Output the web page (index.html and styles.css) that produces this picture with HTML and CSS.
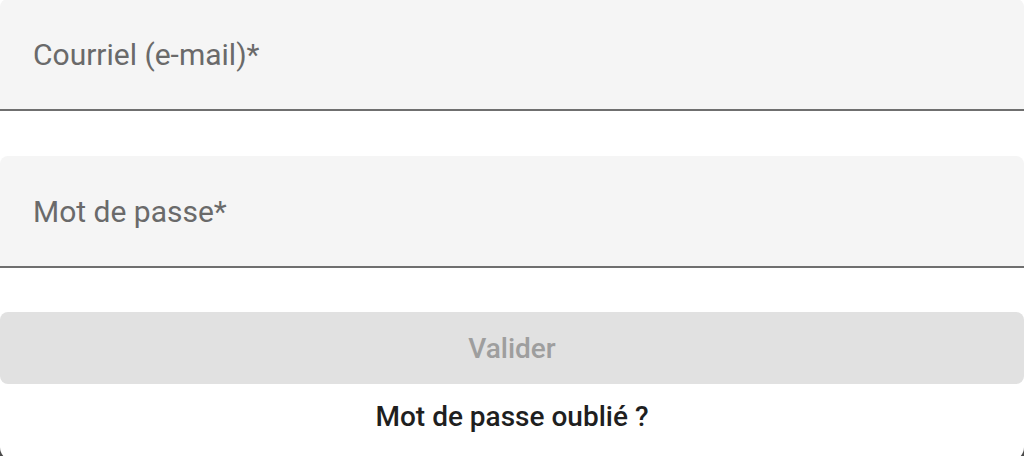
FILE: index.html
```html
<!DOCTYPE html>
<html lang="fr">
<head>
<meta charset="utf-8">
<title>Connexion</title>
<link rel="stylesheet" href="styles.css">
</head>
<body>
<div class="card">
  <form class="form">
    <label class="field field-first">
      <span class="label">Courriel (e-mail)*</span>
    </label>
    <label class="field">
      <span class="label">Mot de passe*</span>
    </label>
    <button type="button" class="submit" disabled>Valider</button>
    <a class="forgot" href="#">Mot de passe oublié ?</a>
  </form>
</div>
</body>
</html>
```
FILE: styles.css
```css
html, body {
  margin: 0;
  padding: 0;
  background: #4a4a4a;
  height: 456px;
  overflow: hidden;
}
body {
  font-family: Roboto, "Liberation Sans", Arial, sans-serif;
}
.card {
  background: #ffffff;
  height: 461px;
  border-radius: 0 0 14px 14px;
  overflow: hidden;
}
.form {
  display: flex;
  flex-direction: column;
}
.field {
  display: flex;
  align-items: center;
  box-sizing: border-box;
  height: 112px;
  padding: 0 0 2px 33px;
  background: #f5f5f5;
  border-bottom: 2px solid #6f6f6f;
  border-radius: 8px 8px 0 0;
}
.field-first {
  margin-top: -1px;
  margin-bottom: 45px;
}
.label {
  font-size: 30px;
  color: #6a6a6a;
  line-height: 36px;
  position: relative;
  top: 2px;
}
.submit {
  margin-top: 44px;
  height: 72px;
  border: none;
  border-radius: 8px;
  background: #e1e1e1;
  color: #9e9e9e;
  font-family: inherit;
  font-size: 28px;
  font-weight: 500;
  padding: 0;
}
.forgot {
  align-self: center;
  margin-top: 16px;
  font-size: 28px;
  font-weight: 500;
  line-height: 34px;
  color: #1f1f1f;
  text-decoration: none;
}
```
